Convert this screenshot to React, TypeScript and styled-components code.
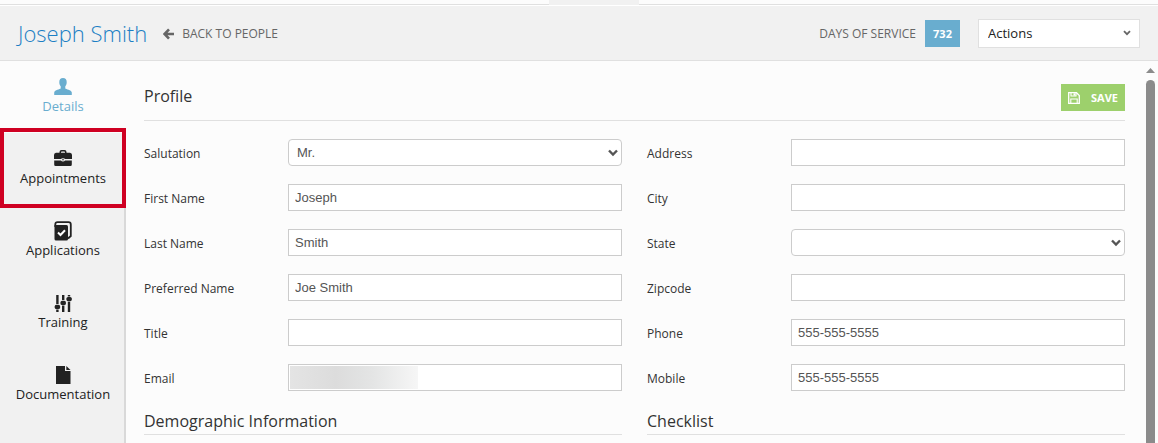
import React, { useId } from "react";
import styled, { createGlobalStyle, css } from "styled-components";

const GlobalStyle = createGlobalStyle`
  * { box-sizing: border-box; }
  body {
    margin: 0;
    background: #fcfcfc;
    color: #333;
    font-family: "Open Sans", sans-serif;
    font-size: 12px;
  }
`;

const Page = styled.div`
  display: flex;
  flex-direction: column;
  min-height: 100vh;
`;

const TopStrip = styled.div`
  display: flex;
  justify-content: center;
  height: 6px;
  padding-left: 30px;
  border-bottom: 1px solid #fff;
  background: linear-gradient(#fcfcfc 4px, #e0e0e0 4px);
`;

const ActiveTab = styled.div`
  width: 90px;
  background: #f1f1f1;
`;

const Header = styled.header`
  display: flex;
  align-items: center;
  height: 55px;
  padding: 0 18px;
  border-bottom: 1px solid #e0e0e0;
  background: #f1f1f1;
`;

const PersonName = styled.h1`
  margin: 0 16px 0 0;
  color: #1c7fc4;
  font-size: 22px;
  font-weight: 300;
  line-height: 30px;
`;

const BackLink = styled.a`
  display: flex;
  align-items: center;
  gap: 8px;
  padding-top: 1px;
  color: #666;
  font-size: 12px;
  line-height: 20px;
  text-decoration: none;
`;

const Service = styled.div`
  display: flex;
  align-items: center;
  gap: 9px;
  margin-left: auto;
  margin-right: 18px;
  color: #666;
`;

const DayCount = styled.span`
  width: 35px;
  background: #69adcf;
  color: #fff;
  font-size: 11px;
  font-weight: 700;
  line-height: 27px;
  text-align: center;
`;

const Body = styled.div`
  display: flex;
  flex: 1;
`;

const Sidebar = styled.nav`
  display: flex;
  flex-direction: column;
  flex: none;
  width: 126px;
  background: linear-gradient(to left, #d9d9d9 2px, #f1f1f1 2px);
`;

const NavItem = styled.a<{ $active?: boolean; $marked?: boolean }>`
  position: relative;
  display: flex;
  flex-direction: column;
  align-items: center;
  height: 72px;
  padding-top: 16px;
  color: #222;
  font-size: 13px;
  line-height: 18px;
  text-decoration: none;

  svg {
    display: block;
  }

  ${(p) =>
    p.$active &&
    css`
      background: #fcfcfc;
      color: #69adcf;
    `}

  ${(p) =>
    p.$marked &&
    css`
      &::after {
        content: "";
        position: absolute;
        inset: -5px 0 -3px;
        border: 4px solid #cf0022;
      }
    `}
`;

const Main = styled.main`
  flex: 1;
  min-width: 0;
  padding: 18px 21px 0 18px;
`;

const ProfileBar = styled.div`
  display: flex;
  align-items: flex-end;
  justify-content: space-between;
  height: 42px;
  margin-bottom: 18px;
  padding-bottom: 9px;
  border-bottom: 1px solid #e0e0e0;
`;

const Title = styled.h2`
  margin: 0;
  font-size: 16px;
  font-weight: 400;
  line-height: 24px;
`;

const ProfileTitle = styled(Title)`
  line-height: 30px;
`;

const SaveButton = styled.button`
  display: flex;
  align-items: center;
  justify-content: space-between;
  width: 64px;
  height: 27px;
  padding: 0 7px;
  border: 0;
  background: #9dd06c;
  color: #fff;
  font: 700 11px "Open Sans", sans-serif;
`;

const Columns = styled.div`
  display: grid;
  grid-template-columns: 1fr 1fr;
  column-gap: 25px;
`;

const Column = styled.section`
  display: flex;
  flex-direction: column;
  gap: 18px;
  min-width: 0;
`;

const Row = styled.div`
  display: grid;
  grid-template-columns: 144px minmax(0, 1fr);
  align-items: center;
`;

const Label = styled.label`
  padding-top: 2px;
  line-height: 20px;
`;

const controlStyle = css`
  width: 100%;
  height: 27px;
  border: 1px solid #ccc;
  background: #fff;
  color: #555;
  font: 13px "Liberation Sans", sans-serif;
`;

const TextBox = styled.input<{ $redacted?: boolean }>`
  ${controlStyle}
  padding: 0 6px;

  ${(p) =>
    p.$redacted &&
    css`
      background: linear-gradient(to right, #e4e4e4, #dcdcdc 36%, #e4e5e5 65%, #f6f6f6) 1px 1px /
        128px 23px no-repeat #fff;
    `}
`;

const SelectWrap = styled.div<{ $wide?: boolean }>`
  display: grid;
  align-items: center;
  width: ${(p) => (p.$wide ? "162px" : "auto")};

  > * {
    grid-area: 1 / 1;
  }

  svg {
    justify-self: end;
    margin-right: ${(p) => (p.$wide ? "9px" : "4px")};
    pointer-events: none;
  }
`;

const Select = styled.select`
  ${controlStyle}
  appearance: none;
  padding: 0 8px;
  border-radius: 4px;
`;

const ActionSelect = styled.select`
  appearance: none;
  width: 100%;
  height: 29px;
  padding: 0 9px;
  border: 1px solid #e0e0e0;
  border-radius: 0;
  background: #fff;
  color: #222;
  font: 13px "Open Sans", sans-serif;
`;

const Subheading = styled(Title)`
  height: 26px;
  border-bottom: 1px solid #e0e0e0;
`;

const ScrollTrack = styled.div`
  display: flex;
  flex-direction: column;
  flex: none;
  align-items: center;
  gap: 7px;
  width: 12px;
  padding: 7px 3px 0 0;
`;

const ScrollThumb = styled.div`
  flex: 1;
  width: 9px;
  border-radius: 5px 5px 0 0;
  background: #8b8b8b;
`;

const Chevron = ({ small }: { small?: boolean }) => (
  <svg width={small ? 8 : 10} height={small ? 6 : 8} viewBox="0 0 10 8" fill="none" aria-hidden="true">
    <path d="M1 1.5 5 5.5 9 1.5" stroke={small ? "#666" : "#555"} strokeWidth="2.4" />
  </svg>
);

const BackArrow = () => (
  <svg width="11" height="12" viewBox="0 0 11 12" fill="none" aria-hidden="true">
    <path d="M6 1.3 1.5 6 6 10.7M2 6H11" stroke="#666" strokeWidth="2.6" />
  </svg>
);

const SaveIcon = () => (
  <svg width="12" height="12" viewBox="0 0 12 12" fill="none" stroke="#fff" aria-hidden="true">
    <path d="M.7.7H8.5L11.3 3.5V11.3H.7Z" strokeWidth="1.3" />
    <path d="M2.8 11V7H9.2V11M3 1V4H8V1" strokeWidth="1.1" />
    <path d="M5.5 1.3H7.3V3.6H5.5Z" fill="#fff" stroke="none" />
  </svg>
);

const NavIcon = ({ children }: { children: React.ReactNode }) => (
  <svg width="18" height="20" viewBox="0 0 18 20" fill="currentColor" aria-hidden="true">
    {children}
  </svg>
);

const UserIcon = () => (
  <NavIcon>
    <path d="M9 1C11.4 1 12.7 2.4 12.7 4.9 12.7 7 12.2 8.2 11.3 9.3V11.6C12 12.6 17.3 12.6 17.8 15.5V18H.2V15.5C.7 12.6 6 12.6 6.7 11.6V9.3C5.8 8.2 5.3 7 5.3 4.9 5.3 2.4 6.6 1 9 1Z" />
  </NavIcon>
);

const BriefcaseIcon = () => (
  <NavIcon>
    <path d="M5.5 4.5V3Q5.5 1 7.5 1H10.5Q12.5 1 12.5 3V4.5H11V3.2Q11 2.4 10.2 2.4H7.8Q7 2.4 7 3.2V4.5Z" />
    <path d="M2 3.8H16Q18 4 18 6V10H11Q10.8 9.3 9 9.3T7 10H0V6Q0 4 2 3.8Z" />
    <path d="M.2 11.4H7Q7.6 12.4 9 12.4T11 11.4H17.8V15.5Q17.8 17 16.5 17H1.5Q.2 17 .2 15.5Z" />
    <circle cx="9" cy="10.8" r=".8" />
  </NavIcon>
);

const ApplicationsIcon = () => (
  <NavIcon>
    <path d="M1.3 6V3.2Q1.3 1.2 3.5 1.2H14.5Q16.8 1.2 16.8 3.5V15L14 17.5" fill="none" stroke="#222" strokeWidth="1.8" />
    <path d="M.5 4H12.5Q14 4 14 5.5V18Q14 19.5 12.5 19.5H2Q.5 19.5 .5 18Z" fill="#222" />
    <path d="M4 11.5 6.5 14 11 9.2" fill="none" stroke="#fff" strokeWidth="2" />
  </NavIcon>
);

const SlidersIcon = () => (
  <NavIcon>
    <path d="M2.2 2H4.6V11H2.2ZM2.2 16.5H4.6V19H2.2Z" />
    <path d="M8 2H10.4V7H8ZM8 12.5H10.4V19H8Z" />
    <path d="M13.8 2H16.2V3.4H13.8ZM13.8 8.8H16.2V19H13.8Z" />
    <rect x=".7" y="11.8" width="5.4" height="4.2" rx="1.6" />
    <rect x="6.5" y="7.8" width="5.4" height="4.2" rx="1.6" />
    <rect x="12.4" y="4" width="5.4" height="4.2" rx="1.6" />
  </NavIcon>
);

const DocumentIcon = () => (
  <NavIcon>
    <path d="M2 1H11V6H16.5V19H2Z" />
    <path d="M12.3 1 16.5 5H12.3Z" />
  </NavIcon>
);

interface FieldProps {
  label: string;
  value?: string;
  select?: boolean;
  redacted?: boolean;
}

const Field = ({ label, value = "", select, redacted }: FieldProps) => {
  const id = useId();
  return (
    <Row>
      <Label htmlFor={id}>{label}</Label>
      {select ? (
        <SelectWrap>
          <Select id={id} defaultValue={value}>
            <option>{value}</option>
          </Select>
          <Chevron />
        </SelectWrap>
      ) : (
        <TextBox id={id} type="text" defaultValue={value} $redacted={redacted} />
      )}
    </Row>
  );
};

export default function App() {
  return (
    <>
      <GlobalStyle />
      <Page>
        <TopStrip>
          <ActiveTab />
        </TopStrip>
        <Header>
          <PersonName>Joseph Smith</PersonName>
          <BackLink href="#people">
            <BackArrow />
            BACK TO PEOPLE
          </BackLink>
          <Service>
            DAYS OF SERVICE
            <DayCount>732</DayCount>
          </Service>
          <SelectWrap $wide>
            <ActionSelect aria-label="Actions">
              <option>Actions</option>
            </ActionSelect>
            <Chevron small />
          </SelectWrap>
        </Header>
        <Body>
          <Sidebar>
            <NavItem href="#details" $active>
              <UserIcon />
              Details
            </NavItem>
            <NavItem href="#appointments" $marked>
              <BriefcaseIcon />
              Appointments
            </NavItem>
            <NavItem href="#applications">
              <ApplicationsIcon />
              Applications
            </NavItem>
            <NavItem href="#training">
              <SlidersIcon />
              Training
            </NavItem>
            <NavItem href="#documentation">
              <DocumentIcon />
              Documentation
            </NavItem>
          </Sidebar>
          <Main>
            <ProfileBar>
              <ProfileTitle>Profile</ProfileTitle>
              <SaveButton type="button">
                <SaveIcon />
                SAVE
              </SaveButton>
            </ProfileBar>
            <Columns>
              <Column>
                <Field label="Salutation" value="Mr." select />
                <Field label="First Name" value="Joseph" />
                <Field label="Last Name" value="Smith" />
                <Field label="Preferred Name" value="Joe Smith" />
                <Field label="Title" />
                <Field label="Email" redacted />
                <Subheading>Demographic Information</Subheading>
              </Column>
              <Column>
                <Field label="Address" />
                <Field label="City" />
                <Field label="State" select />
                <Field label="Zipcode" />
                <Field label="Phone" value="555-555-5555" />
                <Field label="Mobile" value="555-555-5555" />
                <Subheading>Checklist</Subheading>
              </Column>
            </Columns>
          </Main>
          <ScrollTrack aria-hidden="true">
            <svg width="9" height="5" viewBox="0 0 9 5">
              <path d="M0 5 4.5 0 9 5Z" fill="#8b8b8b" />
            </svg>
            <ScrollThumb />
          </ScrollTrack>
        </Body>
      </Page>
    </>
  );
}
